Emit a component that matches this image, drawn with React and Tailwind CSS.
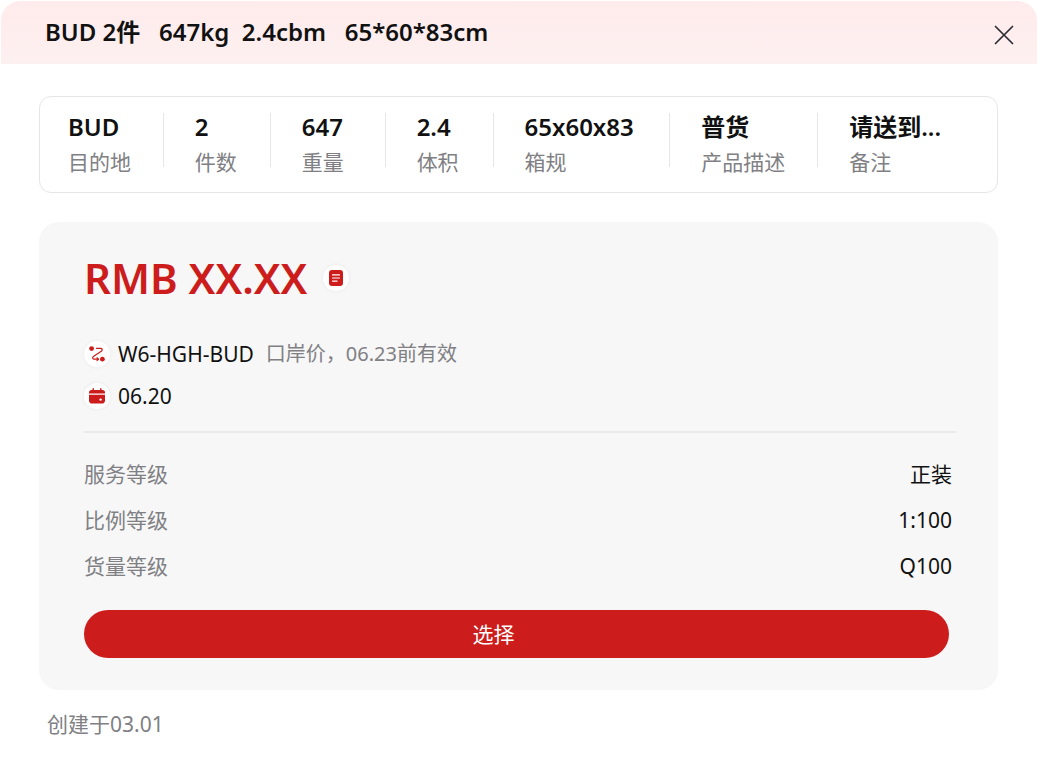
import React from "react";

const specs = [
  { value: "BUD", label: "目的地" },
  { value: "2", label: "件数" },
  { value: "647", label: "重量" },
  { value: "2.4", label: "体积" },
  { value: "65x60x83", label: "箱规" },
  { value: "普货", label: "产品描述" },
  { value: "请送到...", label: "备注" },
];

const grades = [
  { label: "服务等级", value: "正装" },
  { label: "比例等级", value: "1:100" },
  { label: "货量等级", value: "Q100" },
];

function IconBadge({ children }) {
  return (
    <span className="flex h-[26px] w-[26px] shrink-0 items-center justify-center rounded-full bg-white shadow-[0_0_4px_rgba(0,0,0,0.06)]">
      {children}
    </span>
  );
}

function NoteIcon() {
  return (
    <svg width="14" height="16" viewBox="0 0 14 16" fill="none" aria-hidden="true">
      <rect width="14" height="16" rx="3" fill="#cc1d1c" />
      <path d="M3.5 4.9h7M3.5 8h7M3.5 11.1h4.6" stroke="#fff" strokeWidth="1.1" strokeLinecap="round" />
    </svg>
  );
}

function RouteIcon() {
  return (
    <svg width="16" height="16" viewBox="0 0 16 16" fill="none" aria-hidden="true">
      <circle cx="2.6" cy="2.6" r="2.4" fill="#cc1d1c" />
      <circle cx="13.4" cy="13.2" r="2.4" fill="#cc1d1c" />
      <path
        d="M7.4 2.3h4.2c1.6 0 2.2 1.7 1 2.7L4.4 10.6c-1.3 1-.7 2.6.8 2.6H9M8 11.8l1.6 1.4L8 14.6"
        stroke="#cc1d1c"
        strokeWidth="1.2"
        strokeLinecap="round"
        strokeLinejoin="round"
      />
    </svg>
  );
}

function CalendarIcon() {
  return (
    <svg width="16" height="16" viewBox="0 0 16 16" fill="none" aria-hidden="true">
      <path d="M0 5.6V4.4C0 3 1 2 2.4 2h11.2C15 2 16 3 16 4.4v1.2z" fill="#cc1d1c" />
      <path d="M0 6.8h16v5.6c0 2-1.2 3.2-3.2 3.2H3.2c-2 0-3.2-1.2-3.2-3.2z" fill="#cc1d1c" />
      <path d="M4.2.8v2M11.8.8v2" stroke="#cc1d1c" strokeWidth="1.4" strokeLinecap="round" />
      <circle cx="11.6" cy="11.6" r="1.2" fill="#fff" />
    </svg>
  );
}

export default function App() {
  return (
    <main className="min-h-screen bg-white pb-7 font-['Noto_Sans','Noto_Sans_CJK_SC',sans-serif] text-[21px] leading-7 text-[#111]">
      <header className="ml-px flex h-16 items-center justify-between rounded-t-[20px] border-t border-white bg-linear-to-b from-[#ffebec] to-[#fdf0f0] pr-[23px] pl-11">
        <h1 className="pb-0.5 text-2xl font-semibold whitespace-pre">BUD 2件   647kg  2.4cbm   65*60*83cm</h1>
        <button type="button" aria-label="关闭" className="mt-1">
          <svg width="20" height="20" viewBox="0 0 20 20" fill="none" aria-hidden="true">
            <path d="M1.5 1.5l17 17M18.5 1.5l-17 17" stroke="#2b2b33" strokeWidth="1.7" strokeLinecap="round" />
          </svg>
        </button>
      </header>

      <div className="mx-[39px] mt-8">
        <dl className="grid grid-cols-[123fr_107fr_115fr_108fr_177fr_148fr_180fr] rounded-xl border border-[#e6e6e6] pt-[15px] pb-4">
          {specs.map((item, i) => (
            <div key={item.label} className={i === 0 ? "flex pl-7" : "flex gap-[31px]"}>
              {i > 0 && <span className="mt-px h-[54px] w-px bg-[#e6e6e6]" />}
              <div className="flex flex-col gap-1 whitespace-nowrap">
                <dd className="text-2xl leading-[30px] font-semibold">{item.value}</dd>
                <dt className="order-last pt-0.5 text-[#808084]">{item.label}</dt>
              </div>
            </div>
          ))}
        </dl>

        <section className="mt-[29px] rounded-[20px] bg-[#f7f7f7] pt-7 pr-[42px] pb-8 pl-[45px]">
          <div className="flex items-center gap-4">
            <h2 className="text-[42px] leading-[56px] font-semibold text-[#cc1d1c]">RMB XX.XX</h2>
            <IconBadge>
              <NoteIcon />
            </IconBadge>
          </div>

          <div className="mt-[34px] flex items-center gap-2">
            <IconBadge>
              <RouteIcon />
            </IconBadge>
            <span>W6-HGH-BUD</span>
            <span className="ml-1 text-[20px] text-[#808084]">口岸价，06.23前有效</span>
          </div>
          <div className="mt-[14px] flex items-center gap-2">
            <IconBadge>
              <CalendarIcon />
            </IconBadge>
            <span>06.20</span>
          </div>

          <hr className="mt-[21px] border-t-2 border-[#ebebeb]" />

          <dl className="mt-[27px] flex flex-col gap-[18px] pr-1">
            {grades.map((row) => (
              <div key={row.label} className="flex justify-between">
                <dt className="text-[#808084]">{row.label}</dt>
                <dd>{row.value}</dd>
              </div>
            ))}
          </dl>

          <div className="mt-[30px] pr-[7px]">
            <button type="button" className="h-12 w-full rounded-full bg-[#cc1d1c] pr-[46px] text-white">
              选择
            </button>
          </div>
        </section>

        <p className="mt-5 pl-2 text-[#808084]">创建于03.01</p>
      </div>
    </main>
  );
}
